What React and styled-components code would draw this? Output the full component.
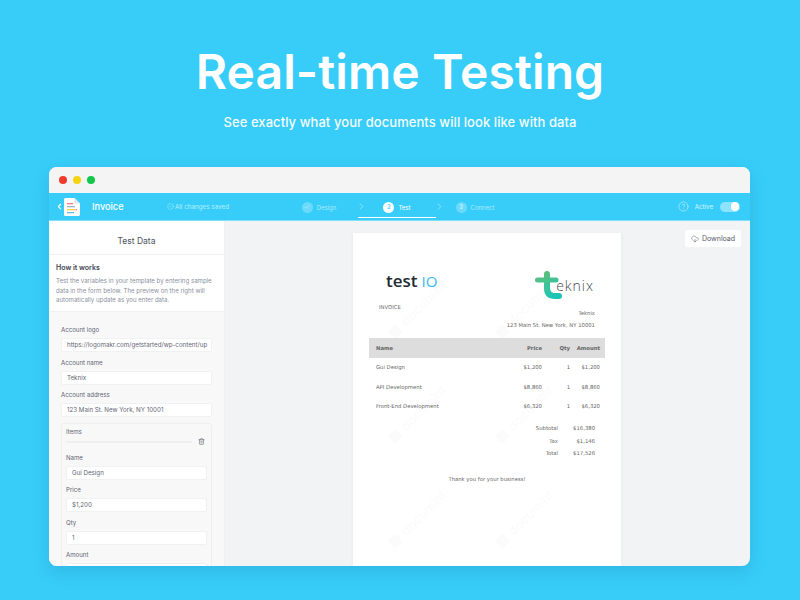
import React from "react";
import styled, { createGlobalStyle } from "styled-components";
import { ChevronLeft, ChevronRight, CircleCheck, Check, CircleHelp, CloudDownload, Trash2 } from "lucide-react";

const Global = createGlobalStyle`
    html, body {
        margin: 0;
        padding: 0;
        height: 600px;
        overflow: hidden;
        background: #38cdf9;
        font-family: "Inter", "Liberation Sans", sans-serif;
    }
    * { box-sizing: border-box; }
`;

const Page = styled.div`
    width: 800px;
    height: 600px;
    background: #38cdf9;
    display: flex;
    flex-direction: column;
    align-items: center;
    padding-top: 39px;
`;

const Title = styled.h1`
    margin: 0;
    color: #fff;
    font-size: 48px;
    line-height: 66px;
    font-weight: 600;
    letter-spacing: 0.1px;
`;

const Subtitle = styled.p`
    margin: 9px 0 0;
    color: #fff;
    font-size: 13px;
    line-height: 16px;
    font-weight: 500;
    letter-spacing: 0.07px;
    opacity: 0.95;
`;

const Window = styled.div`
    width: 701px;
    height: 399px;
    margin: 37px 1px 0 0;
    border-radius: 8px;
    overflow: hidden;
    display: flex;
    flex-direction: column;
    background: #f2f3f5;
    box-shadow: 0 6px 18px rgba(20, 110, 150, 0.22);
`;

const TitleBar = styled.div`
    height: 26px;
    flex: none;
    background: #f4f4f4;
    display: flex;
    align-items: center;
    gap: 6px;
    padding-left: 10px;
`;

const Dot = styled.span`
    width: 8px;
    height: 8px;
    border-radius: 50%;
    background: ${(p) => p.$color};
`;

const NavBar = styled.div`
    height: 28px;
    flex: none;
    background: #38cdf9;
    border-bottom: 1px solid #7fe0fb;
    display: flex;
    align-items: center;
    color: #fff;
`;

const BackGroup = styled.div`
    display: flex;
    align-items: center;
    width: 118px;
    padding-left: 6px;
`;

const DocName = styled.span`
    font-size: 9.2px;
    font-weight: 500;
    margin-left: 12px;
`;

const Saved = styled.span`
    display: flex;
    align-items: center;
    gap: 1px;
    width: 113px;
    font-size: 6.3px;
    color: #b5edfd;
`;

const Steps = styled.div`
    display: flex;
    align-self: flex-start;
`;

const Step = styled.div`
    width: 78px;
    height: 25px;
    padding-top: 4px;
    position: relative;
    display: flex;
    align-items: center;
    justify-content: center;
    gap: 4px;
    font-size: 6px;
    color: ${(p) => (p.$active ? "#fff" : "#a8e9fc")};
    border-bottom: 1px solid ${(p) => (p.$active ? "#fff" : "transparent")};
`;

const StepArrow = styled.span`
    position: absolute;
    left: -2px;
    top: 8px;
    display: flex;
    color: #d5f5fe;
`;

const StepBadge = styled.span`
    width: 11px;
    height: 11px;
    border-radius: 50%;
    display: flex;
    align-items: center;
    justify-content: center;
    font-size: 5.5px;
    font-weight: 600;
    background: ${(p) => (p.$active ? "#fff" : "rgba(255,255,255,0.25)")};
    color: ${(p) => (p.$active ? "#38cdf9" : "#d5f5fe")};
`;

const NavRight = styled.div`
    margin-left: auto;
    display: flex;
    align-items: center;
    padding: 0 10px 0 0;
    font-size: 6.2px;
    color: #d5f5fe;
`;

const ActiveText = styled.span`
    margin: 0 7px 0 6px;
`;

const Toggle = styled.span`
    width: 20px;
    height: 10px;
    border-radius: 5px;
    background: #8be3fc;
    display: flex;
    justify-content: flex-end;
    align-items: center;
    padding-right: 1px;
    &::after {
        content: "";
        width: 8.5px;
        height: 8.5px;
        border-radius: 50%;
        background: #fff;
    }
`;

const Body = styled.div`
    flex: 1;
    min-height: 0;
    display: flex;
`;

const Sidebar = styled.aside`
    width: 176px;
    flex: none;
    background: #f8f8f9;
    border-right: 1px solid #eeeff1;
    overflow: hidden;
`;

const SideHead = styled.div`
    height: 34px;
    padding-top: 7px;
    background: #fff;
    border-bottom: 1px solid #eff0f2;
    display: flex;
    align-items: center;
    justify-content: center;
    font-size: 8.5px;
    color: #4c5260;
`;

const HowTo = styled.div`
    background: #fff;
    border-bottom: 1px solid #eff0f2;
    padding: 8px 7px 0;
    height: 57px;
`;

const HowTitle = styled.div`
    font-size: 7px;
    line-height: 10px;
    font-weight: 600;
    color: #3e4452;
    margin-bottom: 3px;
`;

const HowText = styled.div`
    font-size: 6.1px;
    line-height: 9.7px;
    color: #8a90a0;
    white-space: nowrap;
`;

const Form = styled.div`
    padding: 14px 12px 0;
    display: flex;
    flex-direction: column;
`;

const Label = styled.div`
    font-size: 6.1px;
    line-height: 8px;
    color: #5f6572;
    margin-bottom: 4px;
`;

const Input = styled.div`
    height: 14px;
    flex: none;
    background: #fff;
    border: 1px solid #f0f1f3;
    border-radius: 2px;
    padding: 0 5px;
    font-size: 6.2px;
    line-height: 12px;
    color: #5f6572;
    margin-bottom: 6.5px;
    white-space: nowrap;
    overflow: hidden;
`;

const Items = styled.div`
    border: 1px solid #eeeff1;
    border-radius: 3px;
    margin-top: -1px;
    padding: 4px 4px 0;
`;

const ItemsLabel = styled(Label)`
    margin-bottom: 0;
`;

const ItemsHead = styled.div`
    display: flex;
    align-items: center;
    gap: 6px;
    height: 12px;
    padding-right: 2px;
    margin-bottom: 6px;
    color: #3e4452;
`;

const Rule = styled.div`
    flex: 1;
    height: 2px;
    background: #efeff1;
`;

const Main = styled.main`
    flex: 1;
    min-width: 0;
    position: relative;
    display: flex;
    justify-content: center;
    padding-top: 12px;
    overflow: hidden;
`;

const DownloadBtn = styled.button`
    position: absolute;
    top: 9px;
    right: 9px;
    height: 17px;
    width: 56px;
    border: none;
    border-radius: 2px;
    background: #fff;
    display: flex;
    align-items: center;
    justify-content: center;
    gap: 3px;
    font-family: inherit;
    font-size: 7px;
    color: #555b69;
    padding: 0;
`;

const Paper = styled.div`
    width: 268px;
    height: 400px;
    flex: none;
    position: relative;
    overflow: hidden;
    background: #fff;
    box-shadow: 0 1px 4px rgba(40, 50, 70, 0.05);
    margin-right: 1px;
    font-family: "DejaVu Sans", sans-serif;
    color: #666;
    font-size: 5.3px;
`;

const PaperContent = styled.div`
    position: relative;
    padding: 34px 16px 0;
`;

const Watermark = styled.div`
    position: absolute;
    left: ${(p) => p.$x}px;
    top: ${(p) => p.$y}px;
    display: flex;
    align-items: center;
    gap: 6px;
    transform: rotate(-45deg);
    transform-origin: 0 50%;
    font-family: "Inter", sans-serif;
    font-size: 13px;
    line-height: 14px;
    color: #fbfbfb;
    &::before {
        content: "";
        width: 11px;
        height: 11px;
        border-radius: 2px;
        background: #fbfbfb;
    }
`;

const LogoRow = styled.div`
    display: flex;
    justify-content: space-between;
    height: 34px;
    padding-left: 17px;
`;

const TestLogo = styled.div`
    font-family: "Open Sans", sans-serif;
    font-size: 17px;
    line-height: 28px;
    font-weight: 600;
    color: #222b33;
    span {
        color: #35b8f4;
        font-weight: 500;
        font-size: 15px;
        margin-left: 4px;
    }
`;

const TeknixLogo = styled.div`
    display: flex;
    align-items: flex-start;
    margin: 4px 11px 0 0;
`;

const TeknixWord = styled.span`
    font-family: "Open Sans", sans-serif;
    font-size: 14px;
    font-weight: 300;
    line-height: 14px;
    letter-spacing: 1px;
    color: #444b50;
    margin: 8px 0 0 -6px;
`;

const InvoiceLabel = styled.div`
    margin: 3px 0 0 10px;
    line-height: 7px;
`;

const AccountLine = styled.div`
    text-align: right;
    line-height: 7px;
    margin-top: ${(p) => p.$gap}px;
    padding-right: 10px;
`;

const Table = styled.div`
    margin-top: 8.5px;
`;

const Row = styled.div`
    display: grid;
    grid-template-columns: 1fr 34px 28px 30px;
    align-items: center;
    height: ${(p) => (p.$head ? 20 : 19.5)}px;
    padding: 0 5px 0 7px;
    background: ${(p) => (p.$head ? "#dddddd" : "transparent")};
    font-weight: ${(p) => (p.$head ? 700 : 400)};
    text-align: right;
    & > :first-child {
        text-align: left;
    }
`;

const Totals = styled.div`
    margin-top: 6px;
    display: flex;
    flex-direction: column;
    align-items: flex-end;
    padding-right: 10px;
`;

const TotalRow = styled.div`
    display: grid;
    grid-template-columns: 60px 37px;
    text-align: right;
    height: 12.5px;
    line-height: 12.5px;
`;

const Thanks = styled.div`
    text-align: center;
    line-height: 7px;
    margin-top: 16px;
`;

const DocIcon = () => (
    <svg width="16" height="18" viewBox="0 0 16 18">
        <path d="M1.5 0H10.5L16 5.5V16.5a1.5 1.5 0 0 1-1.5 1.5H1.5A1.5 1.5 0 0 1 0 16.5V1.5A1.5 1.5 0 0 1 1.5 0Z" fill="#fff" />
        <path d="M10.5 0L16 5.5H10.5Z" fill="#dbe6ee" />
        <rect x="3" y="5" width="6" height="1.3" fill="#ff7b7b" />
        <rect x="3" y="8" width="8" height="1.3" fill="#9fb3c8" />
        <rect x="3" y="11" width="8" height="1.3" fill="#f9cf3c" />
        <rect x="11.5" y="11" width="1.5" height="1.3" fill="#ff7b7b" />
        <rect x="3" y="14" width="7" height="1.3" fill="#55c4f5" />
    </svg>
);

// userSpaceOnUse because a straight horizontal stroke has no bounding box height
const TeknixMark = () => (
    <svg width="27" height="29" viewBox="0 0 27 29">
        <defs>
            <linearGradient id="tk" gradientUnits="userSpaceOnUse" x1="4" y1="2" x2="16" y2="28">
                <stop offset="0" stopColor="#62bd78" />
                <stop offset="1" stopColor="#18c6b8" />
            </linearGradient>
        </defs>
        <path d="M12 3V17Q12 25 20 25H24" fill="none" stroke="url(#tk)" strokeWidth="6" strokeLinecap="round" />
        <path d="M2.5 9H21" fill="none" stroke="url(#tk)" strokeWidth="5" strokeLinecap="round" />
    </svg>
);

const items = [
    ["Gui Design", "$1,200", "1", "$1,200"],
    ["API Development", "$8,860", "1", "$8,860"],
    ["Front-End Development", "$6,320", "1", "$6,320"],
];

const totals = [
    ["Subtotal", "$16,380"],
    ["Tax", "$1,146"],
    ["Total", "$17,526"],
];

const marks = [
    [38, 95],
    [145, 95],
    [38, 200],
    [145, 200],
    [38, 305],
    [145, 305],
];

export default function App() {
    return (
        <Page>
            <Global />
            <Title>Real-time Testing</Title>
            <Subtitle>See exactly what your documents will look like with data</Subtitle>
            <Window>
                <TitleBar>
                    <Dot $color="#ee3b2b" />
                    <Dot $color="#f5d40f" />
                    <Dot $color="#12c84a" />
                </TitleBar>
                <NavBar>
                    <BackGroup>
                        <ChevronLeft size={9} strokeWidth={3} />
                        <DocIcon />
                        <DocName>Invoice</DocName>
                    </BackGroup>
                    <Saved>
                        <CircleCheck size={7} strokeWidth={1.5} />
                        All changes saved
                    </Saved>
                    <Steps>
                        <Step>
                            <StepBadge><Check size={6} strokeWidth={2} /></StepBadge>
                            Design
                        </Step>
                        <Step $active>
                            <StepArrow><ChevronRight size={11} strokeWidth={1.2} /></StepArrow>
                            <StepBadge $active>2</StepBadge>
                            Test
                        </Step>
                        <Step>
                            <StepArrow><ChevronRight size={11} strokeWidth={1.2} /></StepArrow>
                            <StepBadge>3</StepBadge>
                            Connect
                        </Step>
                    </Steps>
                    <NavRight>
                        <CircleHelp size={11} strokeWidth={1.2} />
                        <ActiveText>Active</ActiveText>
                        <Toggle />
                    </NavRight>
                </NavBar>
                <Body>
                    <Sidebar>
                        <SideHead>Test Data</SideHead>
                        <HowTo>
                            <HowTitle>How it works</HowTitle>
                            <HowText>Test the variables in your template by entering sample</HowText>
                            <HowText>data in the form below. The preview on the right will</HowText>
                            <HowText>automatically update as you enter data.</HowText>
                        </HowTo>
                        <Form>
                            <Label>Account logo</Label>
                            <Input>https://logomakr.com/getstarted/wp-content/up</Input>
                            <Label>Account name</Label>
                            <Input>Teknix</Input>
                            <Label>Account address</Label>
                            <Input>123 Main St. New York, NY 10001</Input>
                            <Items>
                                <ItemsLabel>Items</ItemsLabel>
                                <ItemsHead>
                                    <Rule />
                                    <Trash2 size={7} strokeWidth={1.5} />
                                </ItemsHead>
                                <Label>Name</Label>
                                <Input>Gui Design</Input>
                                <Label>Price</Label>
                                <Input>$1,200</Input>
                                <Label>Qty</Label>
                                <Input>1</Input>
                                <Label>Amount</Label>
                                <Input />
                            </Items>
                        </Form>
                    </Sidebar>
                    <Main>
                        <DownloadBtn>
                            <CloudDownload size={8} strokeWidth={1.5} />
                            Download
                        </DownloadBtn>
                        <Paper>
                            {marks.map(([x, y]) => (
                                <Watermark key={`${x}-${y}`} $x={x} $y={y}>documint</Watermark>
                            ))}
                            <PaperContent>
                                <LogoRow>
                                    <TestLogo>test<span>IO</span></TestLogo>
                                    <TeknixLogo>
                                        <TeknixMark />
                                        <TeknixWord>eknix</TeknixWord>
                                    </TeknixLogo>
                                </LogoRow>
                                <InvoiceLabel>INVOICE</InvoiceLabel>
                                <AccountLine $gap={-1}>Teknix</AccountLine>
                                <AccountLine $gap={5}>123 Main St. New York, NY 10001</AccountLine>
                                <Table>
                                    <Row $head>
                                        <span>Name</span>
                                        <span>Price</span>
                                        <span>Qty</span>
                                        <span>Amount</span>
                                    </Row>
                                    {items.map((row) => (
                                        <Row key={row[0]}>
                                            {row.map((cell, i) => (
                                                <span key={i}>{cell}</span>
                                            ))}
                                        </Row>
                                    ))}
                                </Table>
                                <Totals>
                                    {totals.map(([label, value]) => (
                                        <TotalRow key={label}>
                                            <span>{label}</span>
                                            <span>{value}</span>
                                        </TotalRow>
                                    ))}
                                </Totals>
                                <Thanks>Thank you for your business!</Thanks>
                            </PaperContent>
                        </Paper>
                    </Main>
                </Body>
            </Window>
        </Page>
    );
}
